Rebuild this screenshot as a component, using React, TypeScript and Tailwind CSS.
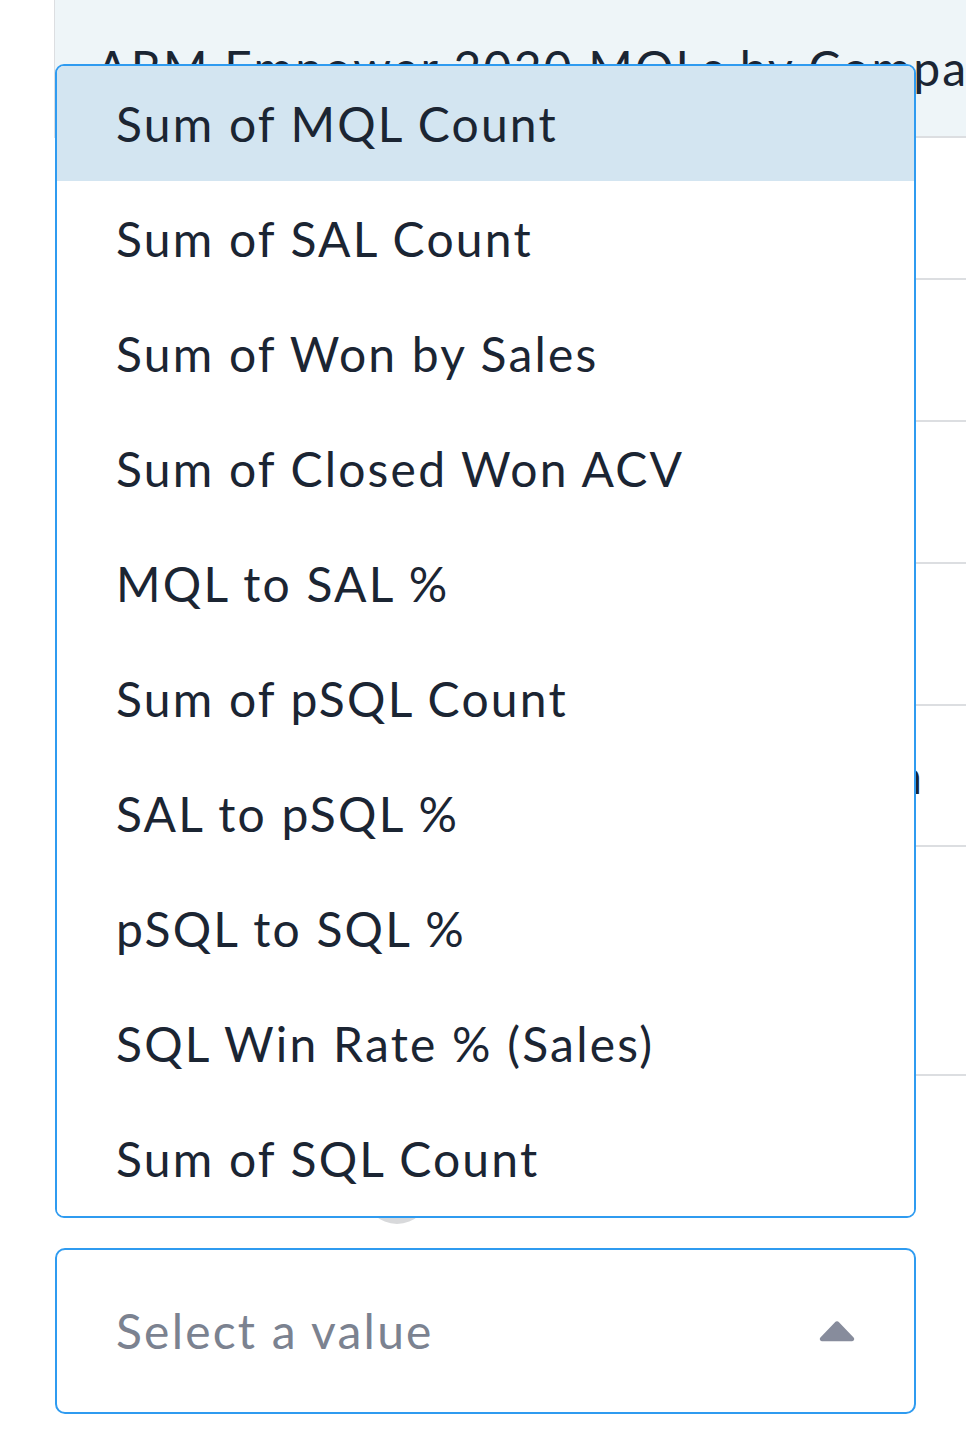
import { useState } from "react";

const options = [
  "Sum of MQL Count",
  "Sum of SAL Count",
  "Sum of Won by Sales",
  "Sum of Closed Won ACV",
  "MQL to SAL %",
  "Sum of pSQL Count",
  "SAL to pSQL %",
  "pSQL to SQL %",
  "SQL Win Rate % (Sales)",
  "Sum of SQL Count",
];

// row heights of the table that sits behind the open menu
const rows = [
  { h: "h-[142px]", label: "" },
  { h: "h-[142px]", label: "" },
  { h: "h-[142px]", label: "" },
  { h: "h-[142px]", label: "" },
  { h: "h-[141px]", label: "Region" },
  { h: "h-[229px]", label: "" },
];

const App = () => {
  const [active, setActive] = useState(0);

  return (
    <div className="relative w-[966px] h-[1456px] bg-white overflow-hidden font-['Lato',sans-serif] tracking-[2.2px] text-[#1b2533]">
      {/* report card behind the dropdown */}
      <div className="ml-[55px]">
        <div className="h-[138px] bg-[#eef5f8] border-l border-b-2 border-[#dcdee1] -ml-px pl-[41px] pt-[40px]">
          <div className="text-[48px] leading-[56px] whitespace-nowrap">
            ARM Empower 2020 MQLs by Company
          </div>
        </div>
        {rows.map((row, i) => (
          <div
            key={i}
            className={`${row.h} flex items-center border-b-2 border-[#dcdee1]`}
          >
            <div className="w-[867px] text-right text-[48px] leading-none tracking-normal whitespace-nowrap">
              {row.label}
            </div>
          </div>
        ))}
      </div>

      <div className="h-[172px] pl-[365px] pt-[84px]">
        <div className="w-[64px] h-[64px] rounded-full bg-[#d8d9db]" />
      </div>

      {/* closed select field */}
      <div className="ml-[55px] w-[861px] h-[166px] rounded-[10px] border-2 border-[#2f9bf0] flex items-center justify-between pl-[59px] pr-[59px]">
        <span className="text-[48px] leading-none text-[#7b8290]">
          Select a value
        </span>
        <svg width="36" height="22" viewBox="0 0 36 22">
          <path
            d="M16 2.2a2.6 2.6 0 0 1 4 0l14.6 15.4c1.3 1.4.4 3.6-1.6 3.6H3c-2 0-2.9-2.2-1.6-3.6z"
            fill="#878c9c"
          />
        </svg>
      </div>

      {/* open options menu */}
      <div className="absolute left-[55px] top-[64px] w-[861px] rounded-[9px] border-2 border-[#2f9bf0] bg-white overflow-hidden">
        {options.map((opt, i) => (
          <div
            key={opt}
            onMouseEnter={() => setActive(i)}
            className={`h-[115px] flex items-center pl-[59px] text-[48px] leading-none whitespace-nowrap cursor-pointer ${
              active === i ? "bg-[#d3e5f1]" : "bg-white"
            }`}
          >
            {opt}
          </div>
        ))}
      </div>
    </div>
  );
};

export default App;
